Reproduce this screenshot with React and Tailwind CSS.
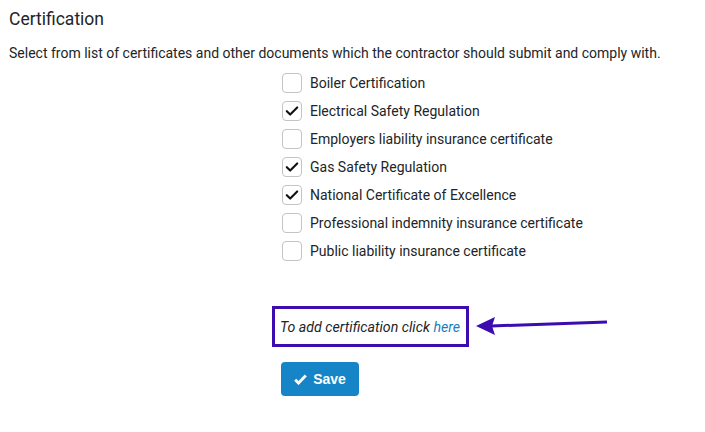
import { useState } from 'react'

const CERTS = [
  { name: 'Boiler Certification', checked: false },
  { name: 'Electrical Safety Regulation', checked: true },
  { name: 'Employers liability insurance certificate', checked: false },
  { name: 'Gas Safety Regulation', checked: true },
  { name: 'National Certificate of Excellence', checked: true },
  { name: 'Professional indemnity insurance certificate', checked: false },
  { name: 'Public liability insurance certificate', checked: false },
]

function Checkbox({ checked, onChange }) {
  return (
    <button
      type="button"
      onClick={onChange}
      className="w-5 h-5 rounded-[4px] border border-[#c4c4c4] bg-white flex items-center justify-center shrink-0"
    >
      {checked && (
        <svg width="16" height="16" viewBox="0 0 16 16" fill="none">
          <path d="M2.8 8.2l3.4 3.4 7-7.2" stroke="#111" strokeWidth="2.1" strokeLinecap="round" strokeLinejoin="round" />
        </svg>
      )}
    </button>
  )
}

export default function App() {
  const [certs, setCerts] = useState(CERTS)

  const toggle = (i) => {
    setCerts((cs) => cs.map((c, j) => (j === i ? { ...c, checked: !c.checked } : c)))
  }

  return (
    <div className="w-[705px] h-[432px] bg-white text-[#212529] font-['Roboto',sans-serif] pl-[9px] pt-[7px]">
      <h2 className="text-[17.5px] leading-[24px]">Certification</h2>
      <p className="text-[14px] leading-[20px] mt-[12px]">
        Select from list of certificates and other documents which the contractor should submit and comply with.
      </p>

      <div className="ml-[273px] mt-[10px] flex flex-col gap-2">
        {certs.map((c, i) => (
          <label key={c.name} className="flex items-center gap-[8px] h-5 cursor-pointer text-[14px]">
            <Checkbox checked={c.checked} onChange={() => toggle(i)} />
            <span>{c.name}</span>
          </label>
        ))}
      </div>

      <div className="ml-[263px] mt-[45px] flex items-center">
        <div className="w-[197px] h-[41px] border-[3px] border-[#3d0cb1] flex items-center pl-[5px] pt-[2px]">
          <span className="italic text-[14.2px]">
            To add certification click <a href="#" className="text-[#1a7fc1]">here</a>
          </span>
        </div>
        <svg width="140" height="24" viewBox="0 0 140 24" className="ml-[4px] -mt-[4px]">
          <polygon points="3,13 22,4 19,13 22,22" fill="#3d0cb1" />
          <line x1="18" y1="13" x2="134" y2="9" stroke="#3d0cb1" strokeWidth="3" />
        </svg>
      </div>

      <button
        type="button"
        className="ml-[272px] mt-[15px] w-[78px] h-[34px] rounded-[4px] bg-[#1585c7] text-white flex items-center justify-center gap-[6px] font-['Liberation_Sans',Arial,sans-serif] font-bold text-[14px]"
      >
        <svg width="13" height="11" viewBox="0 0 13 11">
          <path d="M1.2 5.8l3.3 3.3 7.3-7.5" stroke="white" strokeWidth="2.8" fill="none" strokeLinejoin="miter" />
        </svg>
        Save
      </button>
    </div>
  )
}
